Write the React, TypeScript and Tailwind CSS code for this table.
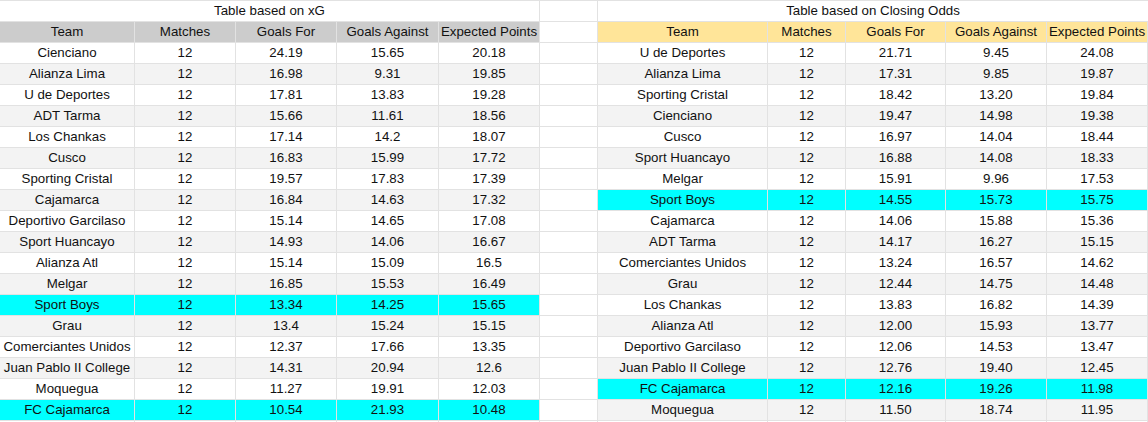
import React from 'react';

type Row = [string, string, string, string, string];

const XG_ROWS: Row[] = [
  ['Cienciano', '12', '24.19', '15.65', '20.18'],
  ['Alianza Lima', '12', '16.98', '9.31', '19.85'],
  ['U de Deportes', '12', '17.81', '13.83', '19.28'],
  ['ADT Tarma', '12', '15.66', '11.61', '18.56'],
  ['Los Chankas', '12', '17.14', '14.2', '18.07'],
  ['Cusco', '12', '16.83', '15.99', '17.72'],
  ['Sporting Cristal', '12', '19.57', '17.83', '17.39'],
  ['Cajamarca', '12', '16.84', '14.63', '17.32'],
  ['Deportivo Garcilaso', '12', '15.14', '14.65', '17.08'],
  ['Sport Huancayo', '12', '14.93', '14.06', '16.67'],
  ['Alianza Atl', '12', '15.14', '15.09', '16.5'],
  ['Melgar', '12', '16.85', '15.53', '16.49'],
  ['Sport Boys', '12', '13.34', '14.25', '15.65'],
  ['Grau', '12', '13.4', '15.24', '15.15'],
  ['Comerciantes Unidos', '12', '12.37', '17.66', '13.35'],
  ['Juan Pablo II College', '12', '14.31', '20.94', '12.6'],
  ['Moquegua', '12', '11.27', '19.91', '12.03'],
  ['FC Cajamarca', '12', '10.54', '21.93', '10.48'],
];

const ODDS_ROWS: Row[] = [
  ['U de Deportes', '12', '21.71', '9.45', '24.08'],
  ['Alianza Lima', '12', '17.31', '9.85', '19.87'],
  ['Sporting Cristal', '12', '18.42', '13.20', '19.84'],
  ['Cienciano', '12', '19.47', '14.98', '19.38'],
  ['Cusco', '12', '16.97', '14.04', '18.44'],
  ['Sport Huancayo', '12', '16.88', '14.08', '18.33'],
  ['Melgar', '12', '15.91', '9.96', '17.53'],
  ['Sport Boys', '12', '14.55', '15.73', '15.75'],
  ['Cajamarca', '12', '14.06', '15.88', '15.36'],
  ['ADT Tarma', '12', '14.17', '16.27', '15.15'],
  ['Comerciantes Unidos', '12', '13.24', '16.57', '14.62'],
  ['Grau', '12', '12.44', '14.75', '14.48'],
  ['Los Chankas', '12', '13.83', '16.82', '14.39'],
  ['Alianza Atl', '12', '12.00', '15.93', '13.77'],
  ['Deportivo Garcilaso', '12', '12.06', '14.53', '13.47'],
  ['Juan Pablo II College', '12', '12.76', '19.40', '12.45'],
  ['FC Cajamarca', '12', '12.16', '19.26', '11.98'],
  ['Moquegua', '12', '11.50', '18.74', '11.95'],
];

const HEADERS = ['Team', 'Matches', 'Goals For', 'Goals Against', 'Expected Points'];
const HIGHLIGHT = ['Sport Boys', 'FC Cajamarca'];

function rowBg(team: string, i: number) {
  if (HIGHLIGHT.includes(team)) return 'bg-[#00ffff]';
  return i % 2 === 1 ? 'bg-[#f3f3f3]' : 'bg-white';
}

const cell =
  'h-[21px] border-r border-b border-[#e2e2e2] flex items-center justify-center whitespace-nowrap overflow-hidden';

function Cells({ row, bg }: { row: Row; bg: string }) {
  return (
    <>
      {row.map((v, j) => (
        <div key={j} className={`${cell} ${bg}`}>
          {v}
        </div>
      ))}
    </>
  );
}

export default function App() {
  return (
    <div
      className="w-[1148px] h-[422px] overflow-hidden bg-white text-[13.3px] text-[#111]"
      style={{ fontFamily: '"Liberation Sans", Arial, sans-serif' }}
    >
      <div className="grid grid-cols-[135px_101px_101px_102px_101px_58px_170px_78px_100px_101px_101px]">
        {/* title row */}
        <div className={`${cell} !h-[22px] border-t col-span-5 bg-white`}>Table based on xG</div>
        <div className={`${cell} !h-[22px] border-t bg-white`} />
        <div className={`${cell} !h-[22px] border-t col-span-5 bg-white border-r-0`}>
          Table based on Closing Odds
        </div>

        {/* header row */}
        {HEADERS.map((h) => (
          <div key={'l' + h} className={`${cell} bg-[#cccccc]`}>
            {h}
          </div>
        ))}
        <div className={`${cell} bg-white`} />
        {HEADERS.map((h) => (
          <div key={'r' + h} className={`${cell} bg-[#ffe599]`}>
            {h}
          </div>
        ))}

        {/* data rows */}
        {XG_ROWS.map((r, i) => {
          const o = ODDS_ROWS[i];
          return (
            <React.Fragment key={i}>
              <Cells row={r} bg={rowBg(r[0], i)} />
              <div className={`${cell} bg-white`} />
              <Cells row={o} bg={rowBg(o[0], i)} />
            </React.Fragment>
          );
        })}

        {/* trailing empty row */}
        {Array.from({ length: 11 }).map((_, j) => (
          <div key={'e' + j} className={`${cell} bg-white`} />
        ))}
      </div>
    </div>
  );
}
